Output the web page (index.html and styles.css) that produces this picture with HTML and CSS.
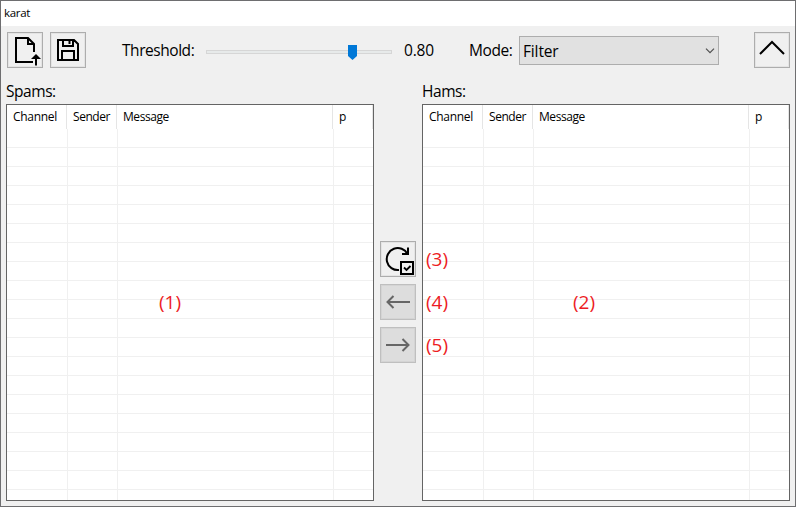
FILE: index.html
```html
<!DOCTYPE html>
<html lang="en">
<head>
<meta charset="utf-8">
<title>karat</title>
<link rel="stylesheet" href="styles.css">
</head>
<body>
<div class="window">
  <header class="titlebar"><span>karat</span></header>
  <div class="toolbar">
    <button class="btn" aria-label="Open"><svg width="36" height="36" viewBox="0 0 36 36" fill="none" stroke="#000" stroke-width="2"><path d="M26 30H9V6H21L27 12V20"/><path d="M21 6V12H27"/><path d="M29 33.500V24"/><path d="M29 22L34 27H24Z" fill="#000" stroke="none"/></svg></button>
    <button class="btn save" aria-label="Save"><svg width="36" height="36" viewBox="0 0 36 36" fill="none" stroke="#000" stroke-width="2"><path d="M8 8H24L28 12V28H8ZM12 28V19H24V28M13 8V14H23V8M19.500 9V12"/></svg></button>
    <span class="label threshold">Threshold:</span>
    <div class="slider"><svg class="thumb" width="9" height="15"><path d="M0 0H9V11L4.500 15L0 11Z" fill="#0078d7"/></svg></div>
    <span class="label value">0.80</span>
    <span class="label mode">Mode:</span>
    <div class="select"><span class="label filter">Filter</span><svg width="10" height="6" fill="none" stroke="#505050" stroke-width="1.200"><path d="M1 .7L5 4.700L9 .7"/></svg></div>
    <button class="btn collapse" aria-label="Collapse"><svg width="36" height="36" fill="none" stroke="#000" stroke-width="2"><path d="M6 22L18 10L30 22"/></svg></button>
  </div>
  <main class="content">
    <section class="pane">
      <h2 class="label">Spams:</h2>
      <div class="list">
        <div class="head"><span class="channel">Channel</span><span class="sender">Sender</span><span class="message">Message</span><span class="p">p</span></div>
        <div class="rows"><i></i><i></i><i></i><i></i></div>
        <span class="note one">(1)</span>
      </div>
    </section>
    <div class="moves">
      <button class="btn" aria-label="Reclassify"><svg width="36" height="36" viewBox="0 0 36 36" fill="none" stroke="#000" stroke-width="2"><path d="M19 29A11 11 0 1 1 27.500 13"/><path d="M28 6.500V13H22"/><path d="M21 21H33V33H21Z"/><path d="M24 26.500L26.500 29L30.500 25" stroke-width="1.800"/></svg></button>
      <button class="btn off" aria-label="Move left"><svg width="36" height="36" fill="none" stroke="#666" stroke-width="2"><path d="M30 18H7M13.500 12L7.500 18L13.500 24"/></svg></button>
      <button class="btn off" aria-label="Move right"><svg width="36" height="36" fill="none" stroke="#666" stroke-width="2"><path d="M6 18H29M22.500 12L28.500 18L22.500 24"/></svg></button>
    </div>
    <section class="pane">
      <h2 class="label">Hams:</h2>
      <div class="list">
        <div class="head"><span class="channel">Channel</span><span class="sender">Sender</span><span class="message">Message</span><span class="p">p</span></div>
        <div class="rows"><i></i><i></i><i></i><i></i></div>
        <span class="note two">(2)</span>
        <span class="note three">(3)</span>
        <span class="note four">(4)</span>
        <span class="note five">(5)</span>
      </div>
    </section>
  </main>
</div>
</body>
</html>
```
FILE: styles.css
```css
* { box-sizing: border-box; }
body { margin: 0; font-family: "Open Sans", "Noto Sans", sans-serif; color: #000; }
.window { width: 796px; height: 507px; border: 1px solid #6e6e70; background: #f0f0f0; display: flex; flex-direction: column; }
.titlebar { height: 25px; background: #fff; padding-left: 3px; font-size: 11.5px; line-height: 24px; letter-spacing: -.3px; }
.toolbar { height: 50px; padding: 6px 5px 0 6px; display: flex; align-items: flex-start; }
.btn { width: 36px; height: 36px; padding: 0; border: 1px solid #adadad; background: #f0f0f0; box-shadow: inset 0 0 0 1px #e4e4e4; flex: none; display: block; }
.btn svg { display: block; margin: -1px; }
.save { margin-left: 7px; }
.label { margin: 0; font-size: 15.5px; font-weight: 400; line-height: 36px; white-space: nowrap; flex: none; }
.threshold { width: 84px; margin-left: 36px; letter-spacing: -.45px; }
.slider { width: 186px; height: 4px; margin-top: 18px; border: 1px solid #d6d6d6; background: #e7eaea; position: relative; }
.thumb { position: absolute; left: 141px; top: -6px; }
.value { width: 65px; margin-left: 12px; letter-spacing: -.2px; }
.mode { width: 50px; letter-spacing: -.4px; }
.select { width: 200px; height: 29px; margin-top: 4px; border: 1px solid #adadad; background: #e1e1e1; display: flex; align-items: center; justify-content: space-between; padding: 0 3px; }
.filter { line-height: 28px; letter-spacing: -.15px; }
.collapse { margin-left: auto; }
.content { flex: 1; display: flex; padding: 0 5px; }
.pane { width: 368px; }
.pane h2 { height: 28px; line-height: 30px; letter-spacing: -.45px; }
.list { height: 397px; border: 1px solid #646464; background: #fff; position: relative; }
.head { height: 24px; display: grid; grid-template-columns: 60px 50px 216px 40px; font-size: 12px; line-height: 24px; }
.head span { padding-left: 6px; border-right: 1px solid #e5e5e5; }
.channel { letter-spacing: -.3px; }
.sender, .message { letter-spacing: -.45px; }
.rows { height: 371px; display: grid; grid-template-columns: 61px 50px 216px 1fr; background: repeating-linear-gradient(#fff 0 18px, #f0f0f0 18px 19px); }
.rows i { border-right: 1px solid #f0f0f0; }
.rows i:last-child { border: 0; }
.moves { width: 48px; padding: 165px 0 0 6px; display: flex; flex-direction: column; gap: 7px; }
.off { background: #ddd; border-color: #bfbfbf; box-shadow: inset 0 0 0 1px #d4d4d4; }
.note { position: absolute; color: #ed1c24; font-size: 19px; line-height: 26px; }
.one { left: 152px; top: 184px; }
.two { left: 150px; top: 184px; }
.three { left: 3px; top: 141px; }
.four { left: 3px; top: 184px; }
.five { left: 3px; top: 227px; }
```
